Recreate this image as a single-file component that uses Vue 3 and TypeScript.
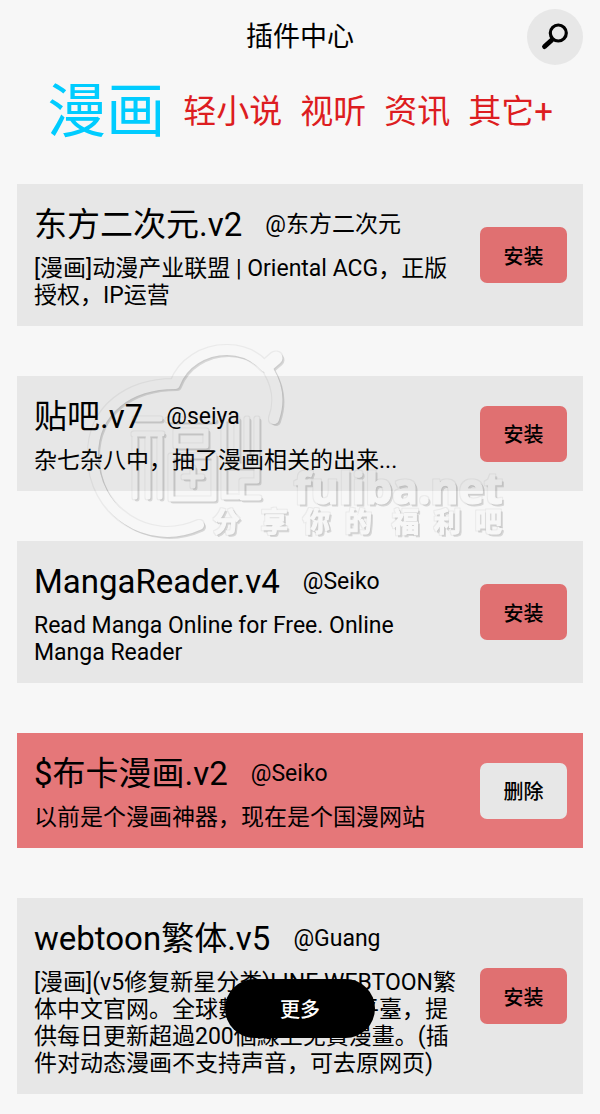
<script setup lang="ts">
interface Plugin {
  name: string
  author: string
  description: string
  installed?: boolean
}

const categories: string[] = ['漫画', '轻小说', '视听', '资讯', '其它+']
const active = '漫画'

const plugins: Plugin[] = [
  { name: '东方二次元.v2', author: '@东方二次元', description: '[漫画]动漫产业联盟 | Oriental ACG，正版授权，IP运营' },
  { name: '贴吧.v7', author: '@seiya', description: '杂七杂八中，抽了漫画相关的出来...' },
  { name: 'MangaReader.v4', author: '@Seiko', description: 'Read Manga Online for Free. Online Manga Reader' },
  { name: '$布卡漫画.v2', author: '@Seiko', description: '以前是个漫画神器，现在是个国漫网站', installed: true },
  {
    name: 'webtoon繁体.v5',
    author: '@Guang',
    description: '[漫画](v5修复新星分类)LINE WEBTOON繁体中文官网。全球數千萬人漫畫平臺，提供每日更新超過200個線上免費漫畫。(插件对动态漫画不支持声音，可去原网页)',
  },
]
</script>

<template>
  <div class="page">
    <header class="topbar">
      <h1>插件中心</h1>
      <button class="search" type="button" aria-label="搜索">
        <svg viewBox="0 0 28 28" width="28" height="28" aria-hidden="true">
          <circle cx="17.3" cy="10" r="8" fill="none" stroke="#000" stroke-width="3.2" />
          <path d="M10.8 17 3.6 23.5" stroke="#000" stroke-width="5" stroke-linecap="round" />
        </svg>
      </button>
    </header>

    <nav class="tabs">
      <a v-for="item in categories" :key="item" href="#" :class="{ active: item === active }">{{ item }}</a>
    </nav>

    <main class="list">
      <article v-for="plugin in plugins" :key="plugin.name" class="card" :class="{ installed: plugin.installed }">
        <div class="info">
          <div class="heading">
            <h2>{{ plugin.name }}</h2>
            <span>{{ plugin.author }}</span>
          </div>
          <p>{{ plugin.description }}</p>
        </div>
        <button class="action" type="button">{{ plugin.installed ? '删除' : '安装' }}</button>
      </article>

      <svg class="watermark" viewBox="80 335 440 215" width="440" height="215" aria-hidden="true">
        <defs>
          <filter id="emboss" x="80" y="335" width="440" height="215" filterUnits="userSpaceOnUse" color-interpolation-filters="sRGB">
            <feFlood flood-color="#000" flood-opacity="0.13" result="dark" />
            <feOffset in="SourceAlpha" dx="2" dy="2" result="low" />
            <feGaussianBlur in="low" stdDeviation="0.6" result="soft" />
            <feComposite in="soft" in2="SourceAlpha" operator="out" result="edge" />
            <feComposite in="dark" in2="edge" operator="in" result="shade" />
            <feFlood flood-color="#000" flood-opacity="0.05" result="faint" />
            <feMorphology in="SourceAlpha" operator="dilate" radius="1" result="wide" />
            <feComposite in="wide" in2="SourceAlpha" operator="out" result="rim" />
            <feComposite in="faint" in2="rim" operator="in" result="rimshade" />
            <feComponentTransfer in="SourceGraphic" result="face">
              <feFuncA type="linear" slope="0.04" />
            </feComponentTransfer>
            <feMerge>
              <feMergeNode in="rimshade" />
              <feMergeNode in="shade" />
              <feMergeNode in="face" />
            </feMerge>
          </filter>
        </defs>
        <g filter="url(#emboss)" fill="none" stroke="#fff" stroke-linejoin="round" stroke-linecap="round">
          <path stroke-width="10" d="M199 525C148 548 93 511 93 455C93 409 130 384 175 384C183 363 204 350 227 350C243 350 256 357 265 367" />
          <path stroke-width="13" d="M269 364L276 358" />
          <path stroke-width="10" d="M269 371C278 386 280 402 274 419" />
          <g stroke-width="5">
            <path d="M135 419H160M134 434H162M135 438V497M148 438V497M160 438V497" />
            <path d="M168 420H214M176 431H206V446H176ZM171 456H214V499H171ZM193 468V486M184 477H202" />
            <path d="M224 419V497H238M224 419H237V464M247 419V462M257 419V466M224 466H257V481H242V498H259" />
          </g>
        </g>
        <g filter="url(#emboss)" fill="#fff" stroke="#fff" stroke-width="1" stroke-linejoin="round">
          <text x="294" y="504" class="mark-site">fuliba.net</text>
          <text x="213 261 303 345 392 434 475" y="532" class="mark-slogan">分享你的福利吧</text>
        </g>
      </svg>
    </main>

    <button class="more" type="button">更多</button>
  </div>
</template>

<style>
body {
  margin: 0;
  background: #f7f7f7;
}
</style>

<style scoped>
.page {
  font-family: Roboto, "Noto Sans CJK SC", sans-serif;
  color: #000;
  background: #f7f7f7;
}

h1,
h2,
p {
  margin: 0;
  font-weight: 400;
}

button {
  border: 0;
  padding: 0;
  color: inherit;
  font-family: inherit;
  cursor: pointer;
}

.topbar {
  display: grid;
  grid-template-columns: 1fr auto 1fr;
  align-items: center;
  height: 74px;
  padding: 0 17px;
}

.topbar h1 {
  grid-column: 2;
  font-size: 27px;
  line-height: 40px;
}

.search {
  display: flex;
  align-items: center;
  justify-content: center;
  justify-self: end;
  width: 56px;
  height: 56px;
  border-radius: 50%;
  background: #e7e7e7;
}

.tabs {
  display: flex;
  align-items: center;
  justify-content: center;
  gap: 18px;
  height: 76px;
}

.tabs a {
  color: #dd1d21;
  font-size: 33px;
  line-height: 50px;
  text-decoration: none;
}

.tabs a.active {
  color: #00ccff;
  font-size: 59px;
  line-height: 78px;
}

.list {
  position: relative;
  display: flex;
  flex-direction: column;
  gap: 50px;
  padding: 34px 17px 20px;
}

.card {
  display: flex;
  align-items: center;
  gap: 16px;
  padding: 17px 16px 17px 17px;
  background: #e7e7e7;
}

.card.installed {
  background: #e57779;
}

.info {
  flex: 1;
  min-width: 0;
}

.heading {
  display: flex;
  align-items: center;
  gap: 23px;
  margin-bottom: 6px;
}

.heading h2 {
  font-size: 33px;
  line-height: 48px;
}

.heading span {
  font-size: 23px;
  line-height: 48px;
}

.info p {
  font-size: 23px;
  line-height: 27px;
}

.action {
  flex: none;
  width: 87px;
  height: 56px;
  border-radius: 7px;
  background: #e07071;
  font-size: 20px;
  font-weight: 500;
}

.installed .action {
  background: #e7e7e7;
}

.watermark {
  position: absolute;
  top: 185px;
  left: 80px;
  pointer-events: none;
}

.mark-site {
  font-family: "Open Sans", sans-serif;
  font-size: 43px;
  font-weight: 700;
}

.mark-slogan {
  font-family: "Noto Sans CJK SC", sans-serif;
  font-size: 27px;
  font-weight: 700;
}

.more {
  position: fixed;
  bottom: 76px;
  left: 50%;
  width: 150px;
  height: 59px;
  margin-left: -75px;
  border-radius: 30px;
  background: #000;
  color: #fff;
  font-size: 20px;
  font-weight: 500;
}
</style>
